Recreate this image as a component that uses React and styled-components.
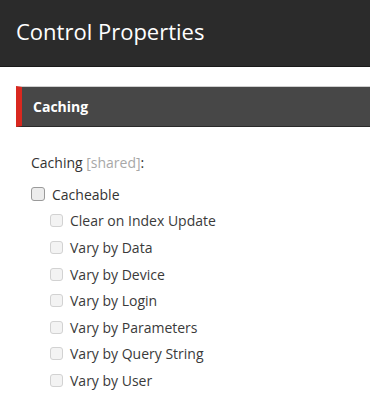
import React from "react";
import styled, { createGlobalStyle } from "styled-components";

const Global = createGlobalStyle`
  html, body { margin: 0; padding: 0; background: #fff; }
  body { font-family: "Open Sans", "Noto Sans", sans-serif; color: #333; }
`;

const Page = styled.div`
  width: 370px;
  height: 419px;
  overflow: hidden;
  background: #fff;
`;

const Header = styled.header`
  height: 67px;
  background: #2b2b2b;
  border-bottom: 1px solid #1a1a1a;
  display: flex;
  align-items: center;
  padding: 0 16px;
  box-sizing: border-box;
`;

const Title = styled.h1`
  margin: 0;
  font-size: 22px;
  font-weight: 400;
  color: #fff;
  line-height: 1;
  padding-bottom: 4px;
`;

const Body = styled.div`
  padding: 19px 0 0 16px;
`;

const SectionBar = styled.div`
  height: 41px;
  background: #474747;
  border-top: 1px solid #cfcfcf;
  border-bottom: 1px solid #2a2a2a;
  border-left: 6px solid #d9281f;
  display: flex;
  align-items: center;
  padding-left: 11px;
  box-sizing: border-box;
`;

const SectionTitle = styled.span`
  font-size: 14px;
  font-weight: 700;
  color: #fff;
`;

const Content = styled.div`
  padding: 26px 0 0 15px;
`;

const FieldLabel = styled.div`
  font-size: 14px;
  color: #333;
  margin-bottom: 9px;
`;

const Muted = styled.span`
  color: #a8a8a8;
`;

const Row = styled.label`
  display: flex;
  align-items: center;
  height: 26.6px;
  padding-left: ${(p) => (p.$indent ? 19 : 0)}px;
  font-size: 14px;
  color: ${(p) => (p.$indent ? "#3a3a3a" : "#333")};
`;

const Box = styled.span`
  width: ${(p) => (p.$small ? 11 : 12)}px;
  height: ${(p) => (p.$small ? 11 : 12)}px;
  border: 1px solid ${(p) => (p.$small ? "#d2d2d2" : "#9a9a9a")};
  border-radius: 3px;
  background: ${(p) => (p.$small ? "#f3f3f3" : "#ececec")};
  margin-right: 7px;
  flex: none;
`;

const subs = [
  "Clear on Index Update",
  "Vary by Data",
  "Vary by Device",
  "Vary by Login",
  "Vary by Parameters",
  "Vary by Query String",
  "Vary by User",
];

export default function App() {
  return (
    <Page>
      <Global />
      <Header>
        <Title>Control Properties</Title>
      </Header>
      <Body>
        <SectionBar>
          <SectionTitle>Caching</SectionTitle>
        </SectionBar>
        <Content>
          <FieldLabel>
            Caching <Muted>[shared]</Muted>:
          </FieldLabel>
          <Row>
            <Box />
            Cacheable
          </Row>
          {subs.map((s) => (
            <Row key={s} $indent>
              <Box $small />
              {s}
            </Row>
          ))}
        </Content>
      </Body>
    </Page>
  );
}
